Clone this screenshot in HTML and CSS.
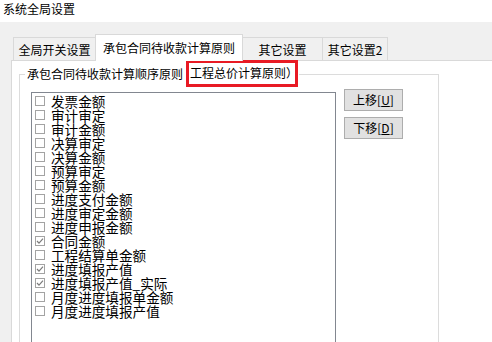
FILE: index.html
```html
<!DOCTYPE html>
<html lang="zh-CN">
<head>
<meta charset="utf-8">
<title>系统全局设置</title>
<link rel="stylesheet" href="styles.css">
</head>
<body>
<div class="titlebar">系统全局设置</div>
<div class="client">
  <div class="tabs">
    <div class="tab tab-1">全局开关设置</div>
    <div class="tab tab-2 active">承包合同待收款计算原则</div>
    <div class="tab tab-3">其它设置</div>
    <div class="tab tab-4">其它设置2</div>
  </div>
  <div class="panel">
    <div class="groupbox">
      <div class="legend">
        <span class="legend-text">承包合同待收款计算顺序原则</span>
        <span class="mark">工程总价计算原则）</span>
      </div>
      <div class="content">
        <div class="list">
          <div class="item"><span class="cb"></span><span class="label">发票金额</span></div>
          <div class="item"><span class="cb"></span><span class="label">审计审定</span></div>
          <div class="item"><span class="cb"></span><span class="label">审计金额</span></div>
          <div class="item"><span class="cb"></span><span class="label">决算审定</span></div>
          <div class="item"><span class="cb"></span><span class="label">决算金额</span></div>
          <div class="item"><span class="cb"></span><span class="label">预算审定</span></div>
          <div class="item"><span class="cb"></span><span class="label">预算金额</span></div>
          <div class="item"><span class="cb"></span><span class="label">进度支付金额</span></div>
          <div class="item"><span class="cb"></span><span class="label">进度审定金额</span></div>
          <div class="item"><span class="cb"></span><span class="label">进度申报金额</span></div>
          <div class="item"><span class="cb checked"><svg viewBox="0 0 10 10" width="10" height="10"><polyline points="2,5 4,7.2 8,2.6" fill="none" stroke="#7a7a7a" stroke-width="1.2"/></svg></span><span class="label">合同金额</span></div>
          <div class="item"><span class="cb"></span><span class="label">工程结算单金额</span></div>
          <div class="item"><span class="cb checked"><svg viewBox="0 0 10 10" width="10" height="10"><polyline points="2,5 4,7.2 8,2.6" fill="none" stroke="#7a7a7a" stroke-width="1.2"/></svg></span><span class="label">进度填报产值</span></div>
          <div class="item"><span class="cb checked"><svg viewBox="0 0 10 10" width="10" height="10"><polyline points="2,5 4,7.2 8,2.6" fill="none" stroke="#7a7a7a" stroke-width="1.2"/></svg></span><span class="label">进度填报产值_实际</span></div>
          <div class="item"><span class="cb"></span><span class="label">月度进度填报单金额</span></div>
          <div class="item"><span class="cb"></span><span class="label">月度进度填报产值</span></div>
        </div>
        <div class="buttons">
          <button class="btn">上移[<u>U</u>]</button>
          <button class="btn">下移[<u>D</u>]</button>
        </div>
      </div>
    </div>
  </div>
</div>
</body>
</html>
```
FILE: styles.css
```css
html, body {
  margin: 0;
  padding: 0;
}
body {
  width: 492px;
  height: 342px;
  overflow: hidden;
  background: #f0f0f0;
  font-family: "Noto Sans CJK SC", "Noto Sans", sans-serif;
  font-size: 12px;
  color: #000;
}
.titlebar {
  height: 22px;
  box-sizing: border-box;
  background: #ffffff;
  padding: 2px 0 0 3px;
  line-height: 14px;
  white-space: nowrap;
}
.client {
  padding-top: 12px;
}
.tabs {
  display: flex;
  align-items: flex-end;
  margin-left: 13px;
  height: 27px;
  position: relative;
  z-index: 1;
}
.tab {
  box-sizing: border-box;
  height: 23px;
  display: flex;
  align-items: center;
  justify-content: center;
  white-space: nowrap;
  border: 1px solid #d9d9d9;
  border-bottom: none;
  background: #f0f0f0;
  margin-bottom: 1px;
}
.tab-1 { width: 82px; border-right: none; }
.tab-2 { width: 148px; }
.tab-3 { width: 80px; border-left: none; }
.tab-4 { width: 65px; border-left: none; }
.tab.active {
  height: 27px;
  background: #ffffff;
  margin-bottom: 0;
  padding-bottom: 1px;
}
.panel {
  margin: -1px 0 0 11px;
  height: 282px;
  box-sizing: border-box;
  border: 1px solid #d9d9d9;
  border-right: none;
  border-bottom: none;
  background: #ffffff;
}
.groupbox {
  margin: 13px 0 0 7px;
  width: 420px;
  height: 268px;
  box-sizing: border-box;
  border: 1px solid #dcdcdc;
  border-bottom: none;
}
.legend {
  display: flex;
  align-items: center;
  height: 14px;
  width: fit-content;
  margin: -8px 0 0 5px;
  padding: 0 1px 0 1px;
  background: #ffffff;
  white-space: nowrap;
  line-height: 14px;
}
.legend-text {
  padding-left: 1px;
}
.mark {
  box-sizing: border-box;
  width: 112px;
  height: 27px;
  margin-left: 3px;
  margin-top: -2px;
  padding: 3px 0 0 1px;
  border: 3px solid #e81a24;
  line-height: 14px;
  overflow: visible;
}
.content {
  display: flex;
  align-items: flex-start;
  padding-left: 11px;
  margin-top: 8px;
}
.list {
  box-sizing: border-box;
  width: 305px;
  height: 250px;
  margin-top: 3px;
  padding-top: 1px;
  border: 1px solid #828790;
  border-bottom: none;
  background: #ffffff;
}
.item {
  display: flex;
  align-items: center;
  height: 14px;
  padding-left: 3px;
  white-space: nowrap;
}
.cb {
  box-sizing: border-box;
  width: 10px;
  height: 10px;
  border: 1px solid #a3a3a3;
  background: #ffffff;
  display: flex;
  align-items: center;
  justify-content: center;
  flex: none;
}
.cb svg {
  display: block;
  margin: -1px;
}
.label {
  margin-left: 6px;
  font-size: 13.6px;
  line-height: 14px;
}
.buttons {
  display: flex;
  flex-direction: column;
  gap: 6px;
  margin-left: 8px;
}
.btn {
  box-sizing: border-box;
  width: 59px;
  height: 22px;
  padding: 0;
  border: 1px solid #adadad;
  background: #e1e1e1;
  font-family: "Noto Sans CJK SC", "Noto Sans", sans-serif;
  font-size: 12px;
  line-height: 14px;
  color: #000;
}
```
